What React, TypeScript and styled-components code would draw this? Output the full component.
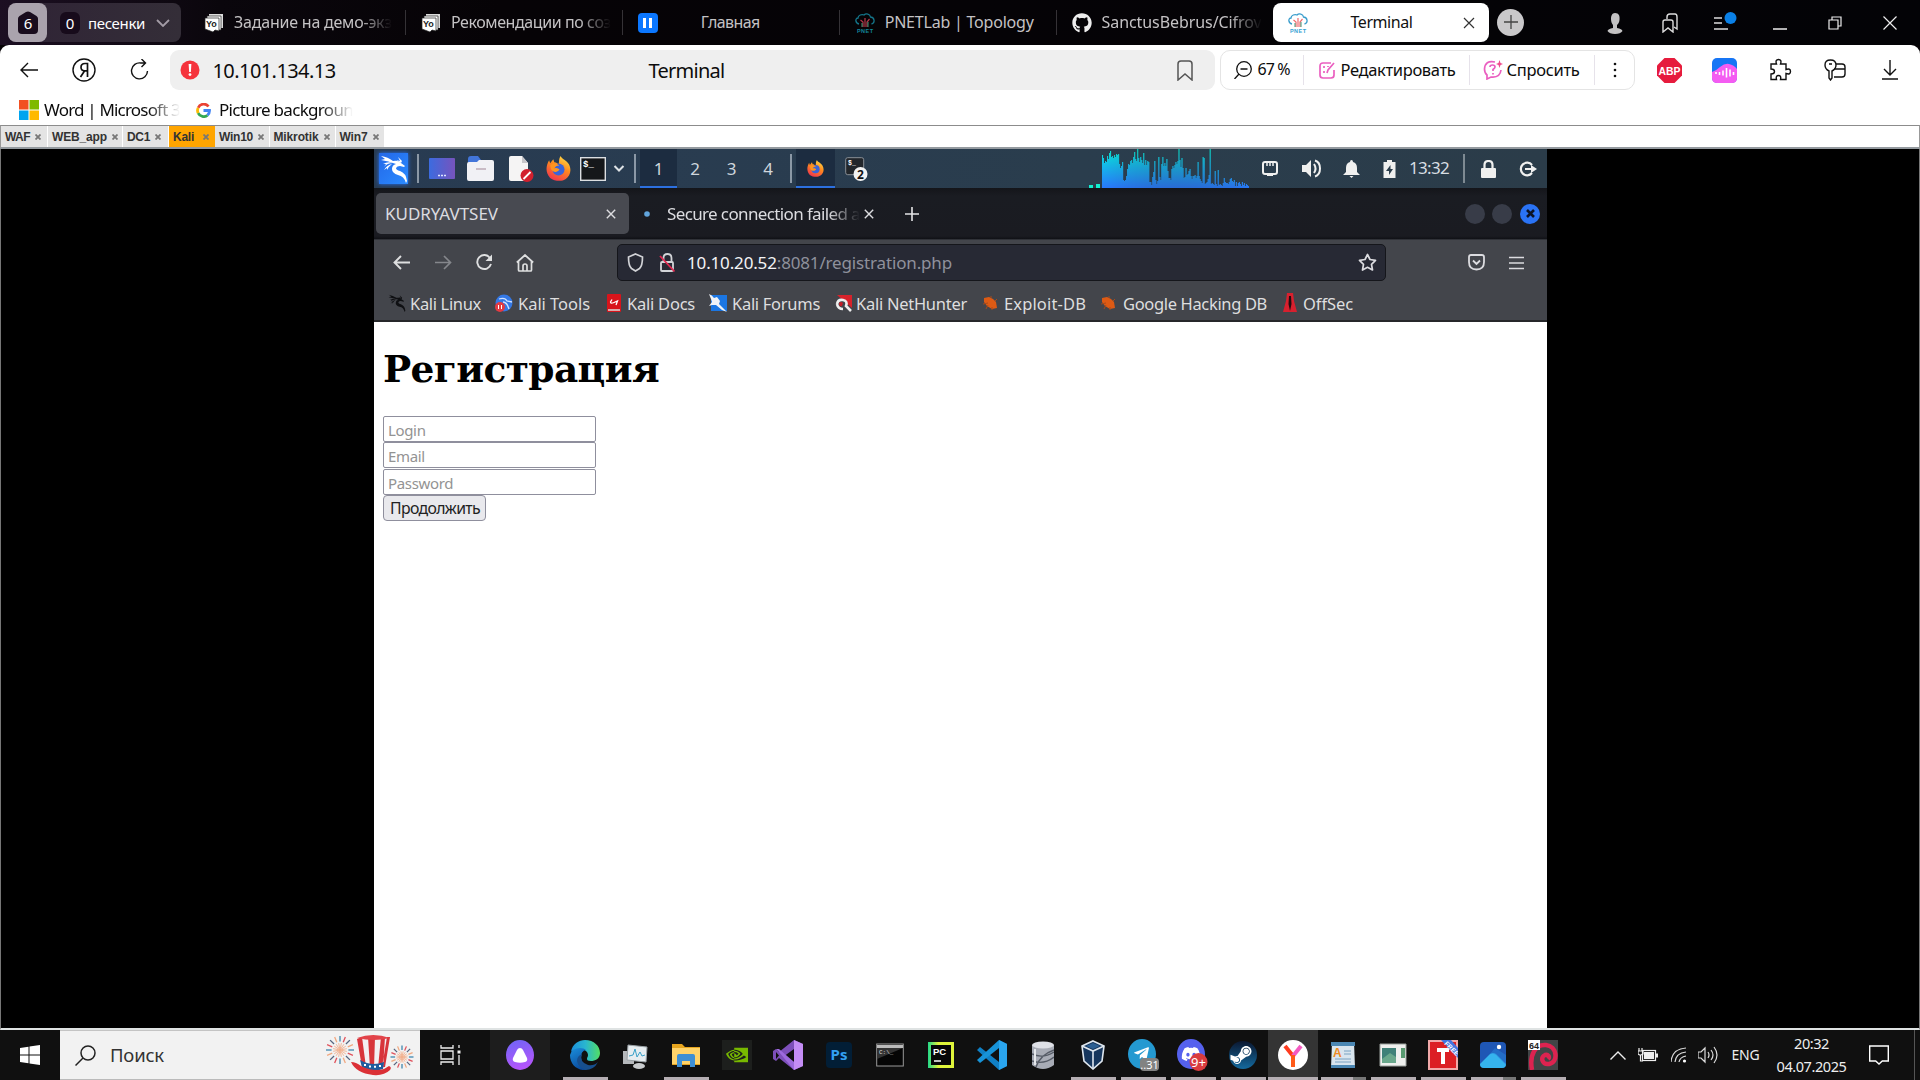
import React, { useLayoutEffect, useRef, useState } from 'react';
import styled, { createGlobalStyle } from 'styled-components';
import { FaGithub, FaSteamSymbol, FaTelegramPlane, FaDiscord } from 'react-icons/fa';
import { SiNvidia } from 'react-icons/si';

const ui = '"Noto Sans", "Open Sans", sans-serif';

const Global = createGlobalStyle`
  * { box-sizing: border-box; }
  html, body { margin: 0; padding: 0; overflow: hidden; background: #000; }
  body { font-family: ${ui}; }
  svg { display: block; flex: none; }
`;

const Screen = styled.div`
  width: 1920px;
  height: 1080px;
  display: flex;
  flex-direction: column;
  overflow: hidden;
  background: #060306;
`;

/* ---------- text that is spaced to fill a known width ---------- */
const Fixed = styled.span<{ $w: number; $l?: number; $s: number; $c?: string; $b?: number; $fade?: boolean; $f?: string; $t?: number }>`
  flex: none;
  width: ${p => p.$w}px;
  margin-left: ${p => p.$l ?? 0}px;
  padding-top: ${p => p.$t ?? 0}px;
  font-size: ${p => p.$s}px;
  font-weight: ${p => p.$b ?? 400};
  font-family: ${p => p.$f ?? 'inherit'};
  color: ${p => p.$c ?? 'inherit'};
  line-height: 1.2;
  white-space: pre;
  ${p => p.$fade && 'mask-image: linear-gradient(90deg, #000 calc(100% - 32px), transparent);'}
`;
const Inner = styled.span`display: inline-block;`;

type LabelProps = { w: number; l?: number; s: number; t?: number; c?: string; b?: number; fade?: boolean; f?: string; text: string; children?: React.ReactNode };
function Label({ w, l, s, t, c, b, fade, f, text, children }: LabelProps) {
  const ref = useRef<HTMLSpanElement>(null);
  const [gap, setGap] = useState(0);
  useLayoutEffect(() => {
    if (ref.current) setGap((w - ref.current.getBoundingClientRect().width) / text.length);
  }, []);
  return (
    <Fixed $w={w} $l={l} $s={s} $t={t} $c={c} $b={b} $fade={fade} $f={f}>
      <Inner ref={ref} style={{ letterSpacing: gap }}>{children ?? text}</Inner>
    </Fixed>
  );
}

const Row = styled.div<{ $h?: number }>`
  display: flex;
  align-items: center;
  flex: none;
  ${p => p.$h && `height: ${p.$h}px;`}
`;
const Cell = styled.div<{ $w: number; $l?: number }>`
  flex: 0 0 ${p => p.$w}px;
  margin-left: ${p => p.$l ?? 0}px;
  display: flex;
  align-items: center;
  justify-content: center;
`;
const Divider = styled.div<{ $l?: number; $h: number; $c: string; $w?: number }>`
  flex: 0 0 ${p => p.$w ?? 1}px;
  margin-left: ${p => p.$l ?? 0}px;
  height: ${p => p.$h}px;
  background: ${p => p.$c};
`;

type IconProps = { w: number; h: number; vb?: string; children: React.ReactNode; c?: string; sw?: number };
const Icon = ({ w, h, vb, children, c = '#111', sw = 1.4 }: IconProps) => (
  <svg width={w} height={h} viewBox={vb ?? `0 0 ${w} ${h}`} fill="none" stroke={c} strokeWidth={sw}>{children}</svg>
);

/* ---------- outer browser ---------- */
const TabStrip = styled(Row)`
  background: linear-gradient(90deg, #1c0f22 0, #0a060c 220px, #060306 500px, #030306 1920px);
  color: #c8c6c8;
`;
const Group = styled.div`
  display: flex;
  align-items: center;
  flex: 0 0 173px;
  height: 39px;
  margin-left: 8px;
  border-radius: 8px;
  background: linear-gradient(90deg, #2f2335, #342e38);
`;
const GroupHome = styled.div`
  display: flex;
  align-items: center;
  justify-content: center;
  width: 39px;
  height: 39px;
  border-radius: 8px;
  background: #aaa3ad;
`;
const Count = styled.div`
  display: flex;
  align-items: center;
  justify-content: center;
  width: 20px;
  height: 22px;
  margin-left: 13px;
  border-radius: 6px;
  background: #170b1b;
  color: #fff;
  font-size: 15px;
`;
const Tab = styled.div<{ $active?: boolean }>`
  display: flex;
  align-items: center;
  flex: 0 0 ${p => (p.$active ? 216 : 216.9)}px;
  height: ${p => (p.$active ? 39 : 25)}px;
  padding-left: 15px;
  border-radius: ${p => (p.$active ? 8 : 0)}px;
  background: ${p => (p.$active ? '#fff' : 'transparent')};
  color: ${p => (p.$active ? '#111' : '#c4c2c4')};
  border-right: ${p => (p.$active ? 0 : 1)}px solid #353236;
  &:nth-child(7) { border-right-color: transparent; }
`;
const Plus = styled(Cell)`
  height: 27px;
  margin-bottom: 1px;
  border-radius: 50%;
  background: #c9c8ca;
`;
const Chrome = styled.div`
  flex: none;
  height: 80px;
  background: #fff;
  border-radius: 9px 9px 0 0;
  color: #0c0c0c;
`;
const Address = styled.div`
  display: flex;
  align-items: center;
  flex: 0 0 1045px;
  height: 40px;
  margin-left: 3px;
  padding-left: 10px;
  border-radius: 9px;
  background: #efefef;
`;
const Tools = styled.div`
  display: flex;
  align-items: center;
  flex: 0 0 415px;
  height: 40px;
  margin-left: 5px;
  padding-left: 13px;
  border: 1px solid #e4e4e4;
  border-radius: 10px;
`;
const Push = styled.div`margin-left: auto; margin-right: 22px;`;

const YoIcon = () => (
  <Icon w={20} h={20} sw={0}>
    <path d="M5 1h14v14h-3V4H5z" fill="#ddd" /><path d="M3 3h14v14h-3V6H3z" fill="#fff" stroke="#222" strokeWidth=".7" />
    <path d="M1 5h14v13l-4-1-2 2-8-3z" fill="#fff" stroke="#222" strokeWidth=".7" />
    <text x="2" y="14" fontSize="9" fontWeight="700" fontFamily="Liberation Sans" fill="#222">Yo</text>
  </Icon>
);
const PnetIcon = ({ dim }: { dim?: boolean }) => (
  <Icon w={20} h={20} c={dim ? '#14758a' : '#3a9dcc'} sw={1.3}>
    <path d="M4 11C0 10 0 5 3 5c0-3 4-4 6-3 2-2 6-1 6.500 2 4 0 5 6 1 7" />
    <path d="M10 14V5M8 14V9L5.500 7M12 14V9l2.500-3" stroke={dim ? '#b5394a' : '#ef6a6f'} strokeWidth="1.200" />
    <path d="M7 10v4M13 9v5" stroke="#3e9a78" strokeWidth="1" />
    <text x="2" y="19.500" fontSize="5.500" fontWeight="700" fontFamily="Liberation Sans" textLength="16" fill={dim ? '#12869a' : '#38a3d4'} stroke="none">PNET</text>
  </Icon>
);

function BrowserTabs() {
  return (
    <TabStrip $h={45}>
      <Group>
        <GroupHome>
          <svg width="22" height="24" viewBox="0 0 22 24">
            <path d="M1 7.500Q1 6 2.500 5L9 1Q11 0 13 1l6.500 4Q21 6 21 7.500V19q0 4-4 4H5q-4 0-4-4z" fill="#190c1d" />
            <text x="11" y="17.500" fontSize="15" fill="#fff" textAnchor="middle" fontFamily="Noto Sans">6</text>
          </svg>
        </GroupHome>
        <Count>0</Count>
        <Label w={57} l={8} s={15} c="#fff" text="песенки" />
        <Cell $w={14} $l={11}><Icon w={14} h={8} c="#a39ca6" sw={1.800}><path d="M1 1l6 6 6-6" /></Icon></Cell>
      </Group>
      <Cell $w={8} />
      <Tab><YoIcon /><Label w={158} l={10} s={16} t={1} fade text="Задание на демо-экз" /></Tab>
      <Tab><YoIcon /><Label w={160} l={10} s={16} t={1} fade text="Рекомендации по соз" /></Tab>
      <Tab>
        <Icon w={20} h={20} sw={0}><rect width="20" height="20" rx="4" fill="#0b77ff" /><path d="M5 5h3v10H5zM11 5h3v10h-3z" fill="#fff" /></Icon>
        <Label w={59} l={43} s={16} t={1} text="Главная" />
      </Tab>
      <Tab><PnetIcon dim /><Label w={149} l={10} s={16} t={1} text="PNETLab | Topology" /></Tab>
      <Tab><FaGithub size={20} color="#eee" /><Label w={160} l={10} s={16} t={1} fade text="SanctusBebrus/Cifrov" /></Tab>
      <Tab $active>
        <PnetIcon /><Label w={62} l={42} s={16} t={1} text="Terminal" />
        <Cell $w={12} $l={51}><Icon w={12} h={12} c="#333" sw={1.200}><path d="M1 1l10 10M11 1L1 11" /></Icon></Cell>
      </Tab>
      <Plus $w={27} $l={8}><Icon w={14} h={14} c="#444" sw={1.300}><path d="M7 0v14M0 7h14" /></Icon></Plus>
      <Cell $w={55} $l={63}><Icon w={16} h={22} sw={0}><path d="M8 1c4 0 5 3 4.500 7-.4 3-1.500 4-2.500 5v3q5 1 5.500 3-2 3-7.500 3t-7.500-3q.5-2 5.500-3v-3C5 12 4 10 4 7c0-3 1-6 4-6z" fill="#c3c2c3" /></Icon></Cell>
      <Cell $w={55}><Icon w={16} h={20} c="#ddd"><path d="M1 19V9q0-2 2-2h6q2 0 2 2v10l-5-4z" /><path d="M5 6V4q0-3 3-3h5q2 0 2 3v12l-3-2" /></Icon></Cell>
      <Cell $w={55}><Icon w={24} h={22} c="#ddd"><path d="M1 6h8M1 11h8M1 17h14" /><circle cx="17.500" cy="6" r="6" fill="#0a80e6" stroke="none" /></Icon></Cell>
      <Cell $w={55}><Icon w={14} h={14} c="#fff"><path d="M0 13h14" /></Icon></Cell>
      <Cell $w={55}><Icon w={14} h={14} c="#eee" sw={1.200}><path d="M1 4h9v9H1zM4 4V1h9v9h-3" /></Icon></Cell>
      <Cell $w={55}><Icon w={14} h={14} c="#eee" sw={1.200}><path d="M.5.5l13 13M13.500.5l-13 13" /></Icon></Cell>
    </TabStrip>
  );
}

function BrowserBars() {
  return (
    <Chrome>
      <Row $h={50}>
        <Cell $w={55} $l={1.500}><Icon w={18} h={16}><path d="M18 8H1M8 1L1 8l7 7" /></Icon></Cell>
        <Cell $w={55}><Icon w={24} h={24}><circle cx="12" cy="12" r="11" /><path d="M15.500 19V5.500h-2.500q-4 0-4 3.800 0 3.500 3.500 3.500h3M12.500 13L8.500 19" strokeWidth="1.700" /></Icon></Cell>
        <Cell $w={55}><Icon w={19} h={22}><path d="M17.500 12A8 8 0 1 1 11 4h4M11.500 0l4 4-4 4" /></Icon></Cell>
        <Address>
          <Icon w={20} h={20} sw={0}><circle cx="10" cy="10" r="9.500" fill="#f5333c" /><path d="M8.600 4h2.800l-.5 8H9.100z" fill="#fff" /><circle cx="10" cy="14.600" r="1.400" fill="#fff" /></Icon>
          <Label w={123} l={13} s={20} t={1} text="10.101.134.13" />
          <Label w={76} l={313} s={20} t={1} text="Terminal" />
          <Push><Icon w={16} h={21} c="#555" sw={1.500}><path d="M1 20V4q0-3 3-3h8q3 0 3 3v16l-7-6z" /></Icon></Push>
        </Address>
        <Tools>
          <Icon w={18} h={18} sw={1.300}><circle cx="10" cy="8" r="7.300" /><path d="M6.500 8h7M5 13l-4.500 5" /></Icon>
          <Label w={32} l={6} s={16} text="67 %" />
          <Divider $l={13} $h={30} $c="#e6e2ea" />
          <Cell $w={17} $l={15}><Icon w={17} h={19} c="#ea5fc0" sw={1.700}><path d="M12 2H4Q1 2 1 5v9q0 3 3 3h8q3 0 3-3V9M8 12l1-3 6-7M5 5v2M5 10v2M9 5v1" /></Icon></Cell>
          <Label w={115} l={5} s={16.500} text="Редактировать" />
          <Divider $l={13} $h={30} $c="#e6e2ea" />
          <Cell $w={20} $l={13}><Icon w={20} h={20} c="#ea5fc0" sw={1.700}><path d="M12 2Q2 0 1.500 9q0 4 2.500 6v4l4-2q9 1 10-7" /><path d="M7 7q0-2 2.500-2T12 7q0 1-2 2.500V11M10 13v1.500" /><path d="M16.500 0l1 3 2.500 1-2.500 1-1 3-1-3L13 4l2.500-1z" fill="#ef4b8c" stroke="none" /></Icon></Cell>
          <Label w={73} l={4} s={16.500} text="Спросить" />
          <Divider $l={14} $h={30} $c="#e6e2ea" />
          <Cell $w={4} $l={18}><Icon w={4} h={16} sw={0}><circle cx="2" cy="2" r="1.300" fill="#111" /><circle cx="2" cy="8" r="1.300" fill="#111" /><circle cx="2" cy="14" r="1.300" fill="#111" /></Icon></Cell>
        </Tools>
        <Cell $w={55} $l={7.500}><Icon w={25} h={25} sw={0}><path d="M7.500 0h10L25 7.500v10L17.500 25h-10L0 17.500v-10z" fill="#e61b3d" /><text x="12.500" y="16.500" fontSize="11" fontWeight="700" fontFamily="Liberation Sans" fill="#fff" textAnchor="middle" textLength="22" lengthAdjust="spacingAndGlyphs">ABP</text></Icon></Cell>
        <Cell $w={55}><Icon w={25} h={25} sw={0}><rect width="25" height="25" rx="5" fill="#1675f5" /><path d="M0 14q5-2 8-5 5-4 9-3 5 1 8 5v9q0 5-5 5H5q-5 0-5-5z" fill="#f45cf2" /><path d="M4 14v2M7.500 14v3M11 12.500v5M14.500 10v9.500M18 11.500v7M21.500 14v3" stroke="#fff" strokeWidth="1.600" /></Icon></Cell>
        <Cell $w={55}><Icon w={24} h={24}><path d="M3 6h5.500Q7 1.500 10.500 1.500T12.500 6H18v5.500q4.500-1.500 4.500 2T18 15.500V21.500H12.500q1-4-2-4t-2 4H3v-5.500q3.500 0 3.500-2.500T3 11z" /></Icon></Cell>
        <Cell $w={55}><Icon w={22} h={22}><path d="M5 12Q1 10 1 6q0-5 5.500-5T12 6q0 4-4 6v7l-1.500 2L5 19zM5 5h3" /><path d="M12 5h6q3 0 3 3v7q0 3-3 3h-8M10 10h11" /></Icon></Cell>
        <Cell $w={55}><Icon w={16} h={20}><path d="M8 0v14M2 9l6 6 6-6M0 19h16" /></Icon></Cell>
      </Row>
      <Row $h={30}>
        <Cell $w={20} $l={19}><Icon w={20} h={20} sw={0}><path d="M0 0h9.500v9.500H0z" fill="#f25022" /><path d="M10.500 0H20v9.500h-9.500z" fill="#7fba00" /><path d="M0 10.500h9.500V20H0z" fill="#00a4ef" /><path d="M10.500 10.500H20V20h-9.500z" fill="#ffb900" /></Icon></Cell>
        <Label w={136} l={5} s={17} fade text="Word | Microsoft 3" />
        <Cell $w={14} $l={16}><Icon w={15} h={15} sw={2.800}><path d="M12.500 3.500A6 6 0 0 0 2.200 4.800" stroke="#ea4335" /><path d="M2.200 4.800a6 6 0 0 0 0 5.400" stroke="#fbbc05" /><path d="M2.200 10.200a6 6 0 0 0 9.300 2" stroke="#34a853" /><path d="M11.500 12.200a6 6 0 0 0 2-4.700H7.500" stroke="#4285f4" /></Icon></Cell>
        <Label w={134} l={8} s={17} fade text="Picture backgroun" />
      </Row>
    </Chrome>
  );
}

/* ---------- lab session tabs ---------- */
const Sessions = styled(Row)`
  background: #fff;
  border-top: 1px solid #8c8c8c;
  border-bottom: 2px solid #949a9f;
  border-left: 1px solid #999;
  border-right: 1px solid #999;
`;
const Session = styled.div<{ $w: number; $on?: boolean }>`
  display: flex;
  align-items: center;
  flex: 0 0 ${p => p.$w}px;
  height: 21px;
  padding-left: 4px;
  border-right: ${p => (p.$on ? 0 : 1)}px solid #fff;
  background: ${p => (p.$on ? '#ffa500' : '#e4e4e4')};
  color: #333;
`;
const sessions: [string, number, number][] = [['WAF', 47, 25], ['WEB_app', 75, 55], ['DC1', 46, 23], ['Kali', 46, 21], ['Win10', 54.5, 34], ['Mikrotik', 66, 45], ['Win7', 49, 28]];

/* ---------- remote desktop ---------- */
const Stage = styled.div`
  flex: none;
  display: flex;
  justify-content: center;
  height: 881px;
  padding: 0 0 0 1px;
  background: #000;
  border-left: 1px solid #777;
  border-right: 1px solid #777;
  border-bottom: 2px solid #dfe3e3;
`;
const Desktop = styled.div`
  width: 1173px;
  height: 879px;
  display: flex;
  flex-direction: column;
  background: #fff;
`;
const Panel = styled(Row)`
  background: linear-gradient(90deg, #283b52, #2a3d4d 60%, #2b3c49);
  color: #d8dde2;
`;
const Work = styled(Cell)<{ $on?: boolean }>`
  height: 39px;
  font-size: 17px;
  padding-top: 1px;
  color: #cfd6dd;
  background: ${p => (p.$on ? '#1c2c40' : 'transparent')};
  border-bottom: 2px solid ${p => (p.$on ? '#2c70e0' : 'transparent')};
`;
const KaliBox = styled(Cell)`
  height: 31px;
  background: linear-gradient(135deg, #2468e8, #2a8aff);
  box-shadow: 0 0 4px #2775ff;
`;
const TitleBar = styled(Row)`
  background: linear-gradient(#14151a, #1a1c22 8px, #1a1b21 48px, #101116);
  color: #dcdce0;
`;
const FoxTab = styled.div`
  display: flex;
  align-items: center;
  flex: 0 0 253px;
  height: 41px;
  margin-left: 2px;
  border-radius: 5px;
  background: #484a51;
`;
const WinDot = styled.div<{ $l: number; $on?: boolean }>`
  display: flex;
  align-items: center;
  justify-content: center;
  flex: 0 0 20px;
  height: 20px;
  margin-left: ${p => p.$l}px;
  border-radius: 50%;
  background: ${p => (p.$on ? '#2a73f5' : '#383c48')};
`;
const FoxBars = styled.div`
  flex: none;
  height: 83px;
  background: #43454b;
  border-top: 1px solid #303238;
  border-bottom: 2px solid #26272a;
  color: #dededf;
`;
const UrlField = styled.div`
  display: flex;
  align-items: center;
  flex: 0 0 769px;
  height: 37px;
  margin-left: 83px;
  border: 1px solid #15161b;
  border-radius: 5px;
  background: #272934;
`;
const Host = styled.span`color: #f4f4f6;`;

const Dragon = ({ s, c }: { s: number; c: string }) => (
  <svg width={s} height={s} viewBox="0 0 28 28" fill={c}>
    <path d="M1 1q7 1 12 5 5-1 8 2l4 3-1 1-4-1q-3 0-4 2 0 2 4 3 6 2 7 10l-1 2q-2-7-8-8-6-2-6-6 0-4 4-5Q8 6 1 5l4-1z" />
    <path d="M3 9q5-3 10-1-6 0-9 4l2-3zM4 15q3-5 8-6-4 3-5 6l0-2zM18 2l4 4-1 2-5-3 4 1z" />
  </svg>
);

const Fox = ({ s }: { s: number }) => (
  <svg width={s} height={s} viewBox="0 0 24 24">
    <defs><linearGradient id="fx" x1=".8" y1="0" x2=".3" y2="1"><stop offset="0" stopColor="#ffe14a" /><stop offset=".45" stopColor="#ff8a1e" /><stop offset="1" stopColor="#f0344e" /></linearGradient></defs>
    <path d="M14 0c1 3 6 4 8 8 3 6 1 11-3 14-4 3-11 2-15-1C-1 16 0 9 3 4l1 3 3-4 1 3c2 0 3 1 4 2 1-3 0-5 2-8z" fill="url(#fx)" />
    <circle cx="12" cy="13" r="5.800" fill="#3a64d8" /><path d="M4 9c3-3 6-2 9 0-3 0-4 1-5 3 2-1 4 0 5 1-2 3-6 3-8 0z" fill="#ff951f" />
  </svg>
);
const Shell = ({ w, h, fs }: { w: number; h: number; fs: number }) => (
  <svg width={w} height={h} viewBox={`0 0 ${w} ${h}`}><rect x=".7" y=".7" width={w - 1.4} height={h - 1.4} fill="#15171a" stroke="#dcdfe2" strokeWidth="1.400" /><text x={w * .12} y={h * .42} fontSize={fs} fontWeight="700" fontFamily="Liberation Mono" fill="#fff">$_</text></svg>
);
const Bug = () => <svg width="15" height="15"><path d="M1 2l5-1 4 2 3 3 1 6-5 1-5-3-3-4z" fill="#dd5a14" /><path d="M3 13l2-4M8 2V0M0 8l5-1M12 5l2-2M9 14v-3" stroke="#a94a1a" /></svg>;

const bars = [33, 30, 25, 27, 26, 32, 29, 35, 37, 31, 32, 30, 33, 31, 34, 33, 34, 24, 20, 22, 26, 8, 7, 8, 12, 19, 24, 23, 27, 28, 25, 31, 36, 29, 27, 39, 30, 26, 31, 28, 25, 35, 23, 28, 23, 27, 26, 6, 6, 3, 11, 16, 27, 8, 4, 7, 31, 11, 8, 24, 31, 22, 25, 22, 29, 17, 10, 10, 8, 19, 22, 20, 23, 26, 24, 27, 39, 28, 21, 30, 20, 10, 11, 20, 13, 14, 17, 19, 12, 9, 12, 12, 13, 10, 12, 26, 12, 9, 7, 5, 31, 30, 4, 5, 6, 9, 13, 39, 4, 5, 4, 3, 17, 4, 2, 18, 3, 4, 3, 2, 5, 10, 6, 5, 5, 4, 6, 9, 10, 7, 6, 8, 2, 6, 2, 5, 6, 4, 2, 6, 3, 5, 2, 4, 3, 2];
const Spectrum = () => (
  <svg width="160" height="39" viewBox="0 0 160 39">
    <defs><linearGradient id="gr" gradientUnits="userSpaceOnUse" x1="0" y1="0" x2="0" y2="39"><stop offset="0" stopColor="#08e6c8" /><stop offset=".3" stopColor="#10c8e6" /><stop offset="1" stopColor="#2878ff" /></linearGradient></defs>
    <path d="M0 36h4v3H0zM7 35h4v4H7z" fill="#12efd0" />
    {bars.map((b, i) => <rect key={i} x={13 + i * 1.006} y={39 - b} width="1.050" height={b} fill="url(#gr)" />)}
  </svg>
);

function KaliPanel() {
  return (
    <Panel $h={39}>
      <KaliBox $w={29} $l={5}><Dragon s={28} c="#fff" /></KaliBox>
      <Divider $l={9} $w={2} $h={29} $c="#8b98a6" />
      <Cell $w={26} $l={10}><svg width="26" height="21"><defs><linearGradient id="dk"><stop stopColor="#3c6bdf" /><stop offset="1" stopColor="#7654bd" /></linearGradient></defs><rect width="26" height="21" rx="1" fill="url(#dk)" /><path d="M9 17.500h8" stroke="#dfe6ff" strokeWidth="1.500" strokeDasharray="2 1" /></svg></Cell>
      <Cell $w={27} $l={12}><svg width="27" height="25"><path d="M1 3q0-3 3-3h7l3 4h10v9H1z" fill="#4275d9" /><path d="M0 8q0-2 2-2h8l2-2h13q2 0 2 2v17q0 2-2 2H2q-2 0-2-2z" fill="#f1f1f5" /><path d="M9 13h10" stroke="#c9bcc6" strokeWidth="2" /></svg></Cell>
      <Cell $w={25} $l={15}><svg width="25" height="26"><path d="M0 2q0-2 2-2h11l6 7v18H2q-2 0-2-2z" fill="#f5f4f4" /><path d="M13 0v7h6z" fill="#c7c6ca" /><circle cx="18" cy="19.500" r="6.500" fill="#d2202e" /><path d="M14.500 23l7-7" stroke="#fff" strokeWidth="1.800" /></svg></Cell>
      <Cell $w={25} $l={12}><Fox s={25} /></Cell>
      <Cell $w={26} $l={9}><Shell w={26} h={24} fs={9} /></Cell>
      <Cell $w={12} $l={7}><Icon w={12} h={7} c="#dfe3e7" sw={2}><path d="M1.500 1L6 5.500 10.500 1" /></Icon></Cell>
      <Divider $l={9} $w={2} $h={29} $c="#8b98a6" />
      <Work $w={37} $l={4} $on>1</Work>
      <Work $w={36}>2</Work>
      <Work $w={37}>3</Work>
      <Work $w={36}>4</Work>
      <Divider $l={4} $w={2} $h={29} $c="#8b98a6" />
      <Work $w={39} $l={4} $on><Fox s={17} /></Work>
      <Cell $w={24} $l={10}>
        <svg width="24" height="26"><rect x=".7" y="1.700" width="18" height="17" rx="2" fill="#22262b" stroke="#8a9097" /><text x="3" y="9" fontSize="6.500" fontWeight="700" fill="#fff" fontFamily="Liberation Mono">$_</text><circle cx="15.500" cy="18" r="7" fill="#f2f2f2" /><text x="15.500" y="22.500" fontSize="12" fontWeight="700" fill="#111" textAnchor="middle" fontFamily="Noto Sans">2</text></svg>
      </Cell>
      <Cell $w={160} $l={220}><Spectrum /></Cell>
      <Cell $w={18} $l={12}><Icon w={16} h={15} c="#f0f0ef" sw={2}><rect x="1" y="1" width="14" height="12" rx="2" /><path d="M5 1v4M8 1v4M11 1v4" strokeWidth="1.500" /><path d="M5 14h6" /></Icon></Cell>
      <Cell $w={21} $l={23}><Icon w={21} h={19} c="#f0f0ef" sw={2}><path d="M0 6h4l5-5v17l-5-5H0z" fill="#f0f0ef" stroke="none" /><path d="M12 5q3 4.500 0 9M13 1.500q5 1.500 5 8t-5 8" /></Icon></Cell>
      <Cell $w={17} $l={20}><Icon w={17} h={18} sw={0}><path d="M8.500 0q1.500 0 1.500 2 4 1 4 6v4l3 3H0l3-3V8q0-5 4-6 0-2 1.500-2zM6.500 16h4l-2 2z" fill="#f0f0ef" /></Icon></Cell>
      <Cell $w={14} $l={22}><Icon w={13} h={18} sw={0}><path d="M.5 2H4V0h5v2h3.500v16H.5z" fill="#f0f0ef" /><path d="M7.500 5L3 11h3v4l4-6H7.500z" fill="#2b3d4b" /></Icon></Cell>
      <Label w={40} l={13} s={17} text="13:32" />
      <Divider $l={14} $w={2} $h={29} $c="#7e8a92" />
      <Cell $w={16} $l={15}><Icon w={15} h={18} c="#f0f0ef" sw={2.200}><rect y="8" width="15" height="10" rx="1" fill="#f0f0ef" stroke="none" /><path d="M3.500 9V5q0-4 4-4t4 4v4" /></Icon></Cell>
      <Cell $w={18} $l={23}><Icon w={18} h={16} c="#f0f0ef" sw={2.200}><path d="M13 4A6.300 6.300 0 1 0 13 12M6 8h9" /><path d="M12 4l6 4-6 4z" fill="#f0f0ef" stroke="none" /></Icon></Cell>
    </Panel>
  );
}

const X = () => <Icon w={10} h={10} c="#dddde0" sw={1.400}><path d="M.8.8l8.400 8.400M9.200.8L.8 9.200" /></Icon>;

function Firefox() {
  return (
    <>
      <TitleBar $h={51}>
        <FoxTab>
          <Label w={113} l={9} s={17} t={2} text="KUDRYAVTSEV" />
          <Cell $w={10} $l={108}><X /></Cell>
        </FoxTab>
        <Cell $w={6} $l={15}><Icon w={6} h={6} sw={0}><circle cx="3" cy="3" r="2.800" fill="#61a5dc" /></Icon></Cell>
        <Label w={193} l={17} s={17} t={2} fade text="Secure connection failed a" />
        <Cell $w={10} $l={4}><X /></Cell>
        <Cell $w={15} $l={30}><Icon w={14} h={14} c="#e4e4e6" sw={1.600}><path d="M7 0v14M0 7h14" /></Icon></Cell>
        <WinDot $l={546} /><WinDot $l={7} />
        <WinDot $l={8} $on><Icon w={9} h={9} c="#0c1426" sw={2.600}><path d="M1 1l7 7M8 1L1 8" /></Icon></WinDot>
      </TitleBar>
      <FoxBars>
        <Row $h={45}>
          <Cell $w={17} $l={19}><Icon w={17} h={15} c="#dedfe0" sw={1.900}><path d="M17 7.500H1.500M8 1L1.500 7.500 8 14" /></Icon></Cell>
          <Cell $w={17} $l={25}><Icon w={17} h={15} c="#85878c" sw={1.700}><path d="M0 7.500h15.500M9 1l6.500 6.500L9 14" /></Icon></Cell>
          <Cell $w={18} $l={23}><Icon w={18} h={17} c="#dedfe0" sw={1.900}><path d="M15 4A7 7 0 1 0 16 10" /><path d="M17 .5V7h-6.500z" fill="#dedfe0" stroke="none" /></Icon></Cell>
          <Cell $w={18} $l={23}><Icon w={18} h={18} c="#dedfe0" sw={1.700}><path d="M.8 8.500L9 1l8.200 7.500M2.500 7.500V16q0 1 1 1h11q1 0 1-1V7.500M7 17v-5q0-2 2-2t2 2v5" /></Icon></Cell>
          <UrlField>
            <Cell $w={18} $l={8}><Icon w={17} h={19} c="#d2d3d7" sw={1.700}><path d="M8.500 1l7 3q0 9-3 11.500l-4 2.500-4-2.500Q1.500 13 1.500 4z" /></Icon></Cell>
            <Cell $w={17} $l={15}><Icon w={17} h={20} c="#d2d3d7" sw={1.800}><rect x="2" y="9" width="12" height="9" rx="1" /><path d="M4.500 9V5q0-4 4-4t4 4v4" /><path d="M1 3l14.500 15.500" stroke="#e22850" /></Icon></Cell>
            <Label w={265} l={11} s={17} t={1} c="#8f919c" text="10.10.20.52:8081/registration.php"><Host>10.10.20.52</Host>:8081/registration.php</Label>
            <Cell $w={18} $l={406}><Icon w={19} h={19} c="#dcdce0" sw={1.700}><path d="M9.500 1.500l2.500 5 5.500.8-4 4 1 5.700-5-2.700-5 2.700 1-5.700-4-4L7 6.500z" strokeLinejoin="round" /></Icon></Cell>
          </UrlField>
          <Cell $w={18} $l={81}><Icon w={17} h={17} c="#dcdce0" sw={1.800}><path d="M3 1h11q2 0 2 2v5q0 7.500-7.500 7.500T1 8V3q0-2 2-2zM5 6.500l3.500 3.500L12 6.500" /></Icon></Cell>
          <Cell $w={15} $l={24}><Icon w={15} h={14} c="#dcdce0" sw={1.600}><path d="M0 1.500h15M0 7h15M0 12.500h15" /></Icon></Cell>
        </Row>
        <Row $h={36}>
          <Cell $w={19} $l={13}><Dragon s={18} c="#0f1013" /></Cell>
          <Label w={71} l={4} s={16.500} t={1} text="Kali Linux" />
          <Cell $w={18} $l={14}><svg width="18" height="18"><circle cx="9" cy="9" r="8.500" fill="#3478e5" /><path d="M4 5q6-2 8 2l5 1M8 8q4 0 6 7" stroke="#cfe0ff" strokeWidth="1.300" fill="none" /><circle cx="5" cy="13" r="5" fill="#e33b42" /><path d="M3.500 11v4M6.500 11v4" stroke="#fff" /></svg></Cell>
          <Label w={72} l={5} s={16.500} t={1} text="Kali Tools" />
          <Cell $w={14} $l={17}><svg width="14" height="18"><rect width="14" height="18" rx="1" fill="#d8141b" /><path d="M1 16h12" stroke="#ddd" strokeWidth="1.500" /><path d="M5 5.500L3.500 8q0 2 3.500.5T10.500 7L9 11" stroke="#fff" fill="none" strokeWidth="1.300" /></svg></Cell>
          <Label w={68} l={6} s={16.500} t={1} text="Kali Docs" />
          <Cell $w={18} $l={14}><svg width="18" height="18"><rect x="2" y="1" width="16" height="16" fill="#1b76e3" /><path d="M0 0q3 1 5 4l3-1 3 4-1 3 8 8-5-2-6-5-4 0-3 1 3-4-1-3z" fill="#f0f3f8" /></svg></Cell>
          <Label w={88} l={5} s={16.500} t={1} text="Kali Forums" />
          <Cell $w={18} $l={14}><svg width="18" height="18"><path d="M3 1h15v13z" fill="#d7222b" /><path d="M3 10q1-5 6-4t3 6l5 5M9 15q-5 0-6-5" fill="none" stroke="#eee" strokeWidth="2.600" /><path d="M5 9q2-2 4 0l-1 3q-3 1-3-3z" fill="#c41d28" /></svg></Cell>
          <Label w={111} l={4} s={16.500} t={1} text="Kali NetHunter" />
          <Cell $w={15} $l={16}><Bug /></Cell>
          <Label w={82} l={6} s={16.500} t={1} text="Exploit-DB" />
          <Cell $w={15} $l={15}><Bug /></Cell>
          <Label w={144} l={7} s={16.500} t={1} text="Google Hacking DB" />
          <Cell $w={14} $l={16}><svg width="14" height="20"><path d="M4 0h6l1 8 3 11H0L3 8z" fill="#d8202e" /><path d="M6 3h2l.5 8L7 18l-1.500-7z" fill="#220d10" /></svg></Cell>
          <Label w={50} l={6} s={16.500} t={1} text="OffSec" />
        </Row>
      </FoxBars>
    </>
  );
}

const Page = styled.main`
  flex: 1;
  padding: 24px 9px;
  display: flex;
  flex-direction: column;
  align-items: flex-start;
`;
const Title = styled.h1`
  margin: 0 0 23px;
  height: 47px;
  display: flex;
  align-items: center;
  color: #000;
`;
const Field = styled.input`
  width: 213px;
  height: 26px;
  margin-bottom: .4px;
  padding: 3px 4px 1px;
  border: 1px solid #8f8f9d;
  border-radius: 2px;
  font: 15px ${ui};
  letter-spacing: -.35px;
  background: #fff;
  outline: none;
  &::placeholder { color: #939393; opacity: 1; }
`;
const Submit = styled.button`
  display: flex;
  align-items: center;
  width: 103px;
  height: 26px;
  padding: 1px 0 0 6px;
  border: 1px solid #8f8f9d;
  border-radius: 4px;
  background: #e9e9ed;
  color: #222;
  font-family: ${ui};
`;

/* ---------- Windows taskbar ---------- */
const Taskbar = styled(Row)`
  background: #101010;
  color: #eee;
`;
const Search = styled.div`
  display: flex;
  align-items: center;
  flex: 0 0 360px;
  height: 50px;
  padding-left: 15px;
  background: #f2f2f2;
  border-top: 1px solid #c4c4c4;
  border-bottom: 1px solid #bbb;
  color: #333;
`;
const Assistant = styled.div`
  display: flex;
  align-items: center;
  justify-content: center;
  flex: 0 0 60px;
  height: 50px;
  background: #1d1d1d;
`;
const Task = styled.div<{ $run?: boolean; $on?: boolean; $more?: boolean }>`
  display: flex;
  align-items: center;
  justify-content: center;
  flex: 0 0 ${p => (p.$run ? 50 : 51)}px;
  height: 50px;
  padding-top: 3px;
  border-bottom: 3px solid transparent;
  background: ${p => (p.$on ? '#343434' : 'transparent')};
  ${p => p.$run && `border-image: linear-gradient(90deg, transparent ${p.$on ? 0 : 5.5}px, #b5aeb3 ${p.$on ? 0 : 5.5}px, #b5aeb3 ${p.$more ? 34 : p.$on ? 51 : 45}px, ${p.$more ? '#777 34px, #777 45px,' : ''} transparent ${p.$on ? 51 : 45}px) 3;
  border-style: solid; border-width: 0 0 3px;`}
`;
const Clock = styled.div`
  display: flex;
  flex-direction: column;
  align-items: center;
  justify-content: center;
  flex: 0 0 70px;
  margin-left: 17px;
  gap: 5px;
`;

const burst = (cx: number, cy: number, r: number) => Array.from({ length: 16 }, (_, i) => {
  const a = (i * Math.PI) / 8;
  const c = ['#3f86ad', '#e0525c', '#56657f', '#f0a880'][i % 4];
  return <g key={i}><path d={`M${cx + Math.cos(a) * r * .6} ${cy + Math.sin(a) * r * .6}L${cx + Math.cos(a) * r} ${cy + Math.sin(a) * r}`} stroke={c} strokeWidth="1.300" /><path d={`M${cx} ${cy}L${cx + Math.cos(a + .2) * r * .5} ${cy + Math.sin(a + .2) * r * .5}`} stroke="#f3b08d" strokeWidth=".9" /></g>;
});
const Hat = () => (
  <svg width="90" height="44" viewBox="0 0 90 44">
    {burst(15, 17, 14)}{burst(77, 24, 11.500)}
    <path d="M32 6q16-5 33-1l-6 30H38z" fill="#f3eff2" />
    <path d="M32 6l5 28h4L37 4zM43 4l2 31h4l1-31zM56 4l-3 31h5l2-31zM62 4h3l-5 30h-3z" fill="#d8343b" />
    <path d="M32 5q16-6 33 0-16 4-33 0z" fill="#e2444a" />
    <path d="M35 27q12 7 24 2l-1 7q-12 4-21-2z" fill="#1f5c9e" />
    <path d="M39 32h2M44 33.500h2M49 33.800h2M54 33h2" stroke="#fff" strokeWidth="2" />
    <path d="M26 29q5 0 10 4 12 6 23 3l5-3q3 1 1 4-6 6-17 5-17-2-22-13z" fill="#db3036" />
  </svg>
);

const icon = {
  alice: <svg width="28" height="30"><defs><linearGradient id="al" x2=".3" y2="1"><stop stopColor="#6d65f7" /><stop offset="1" stopColor="#b356fa" /></linearGradient></defs><ellipse cx="14" cy="15" rx="14" ry="15" fill="url(#al)" /><path d="M14 8q2 0 3 2l4 8q1 3-2 4-5 1.500-10 0-3-1-2-4l4-8q1-2 3-2z" fill="#fff" /></svg>,
  edge: <svg width="30" height="30"><defs><linearGradient id="e1"><stop stopColor="#1b8fdc" /><stop offset=".5" stopColor="#29b6cf" /><stop offset="1" stopColor="#52df64" /></linearGradient><linearGradient id="e2" y2="1" x2=".5"><stop stopColor="#1b8fdc" /><stop offset="1" stopColor="#0a4a9c" /></linearGradient></defs><path d="M1 12C2 4 9 0 15 0c9 0 15 6 15 13 0 6-5 8-9 8-3 0-4-1-4-2 0-2 1-2 1-4 0-3-3-6-8-6-5 0-9 3-9 3z" fill="url(#e1)" /><path d="M0 15q2-7 10-7 4 0 6 2-5 1-5 7 0 9 9 11-3 2-7 2C5 29 0 23 0 15z" fill="url(#e2)" /><path d="M12 14q-3 8 6 11 6 1 10-3-4 8-13 8-7-3-8-9 0-5 5-7z" fill="#174f8e" /></svg>,
  perf: <svg width="28" height="28"><path d="M1 10h11v13H1z" fill="#b5b8bb" /><path d="M6 4l19 2-1 15-19-2z" fill="#e7edf0" stroke="#9aa1a5" /><path d="M7 15l4-1 2-6 2 8 3-5 2 4 3-1" stroke="#3aa1c9" fill="none" /><ellipse cx="17" cy="25" rx="6" ry="3" fill="#c9ccce" /></svg>,
  files: <svg width="28" height="26"><path d="M0 2h10l3 3h15v18H0z" fill="#e7a51e" /><path d="M0 6h28v16H0z" fill="#ffd36a" /><path d="M5 14q0-2 2-2h14q2 0 2 2v11h-5v-6h-8v6H5z" fill="#3e8fd4" /></svg>,
  nvidia: <svg width="30" height="30"><rect width="30" height="30" fill="#1d1f1d" /><foreignObject x="4" y="4" width="22" height="22"><SiNvidia size={22} color="#78b900" /></foreignObject></svg>,
  vs: <svg width="30" height="30"><path d="M21 0l9 4v22l-9 4L6 18l-3 3-3-2V11l3-2 3 3z" fill="#7d4fba" /><path d="M21 0l9 4v22l-9 4z" fill="#c48df5" /><path d="M21 9l-9 6.500L21 22zM3 12v7l3-3.500z" fill="#101010" /><path d="M3 9l3 3 15 18V22L6 9z" fill="#9d6add" /></svg>,
  ps: <svg width="26" height="26"><rect width="26" height="26" rx="4" fill="#021e36" /><text x="13" y="18" fontSize="15" fontWeight="700" fontFamily="Noto Sans" fill="#33a1f2" textAnchor="middle">Ps</text></svg>,
  cmd: <svg width="28" height="24"><rect x=".7" y="1" width="26.600" height="22" fill="#050505" stroke="#999" /><path d="M1 2h26v3H1z" fill="#bbb" /><path d="M1 5h26L1 16z" fill="#333" /><text x="3" y="11" fontSize="6" fill="#ddd" fontFamily="Liberation Mono">C:\_</text></svg>,
  pc: <svg width="26" height="26"><defs><linearGradient id="pc"><stop stopColor="#21d789" /><stop offset=".4" stopColor="#dff43a" /></linearGradient></defs><rect width="26" height="26" fill="url(#pc)" /><rect x="3" y="3" width="20" height="20" fill="#070707" /><text x="5" y="13" fontSize="9.500" fontWeight="700" fontFamily="Liberation Sans" fill="#fff">PC</text><path d="M6 19h7" stroke="#fff" strokeWidth="1.500" /></svg>,
  code: <svg width="30" height="30"><path d="M22 0l8 4v22l-8 4L0 10l3-3 19 15z" fill="#1080c5" /><path d="M0 20l3 3L22 8V0z" fill="#1793d8" /><path d="M22 0l8 4v22l-8 4z" fill="#2aa5ee" /></svg>,
  db: <svg width="22" height="28"><path d="M0 4v20q11 8 22 0V4z" fill="#a8acb6" /><ellipse cx="11" cy="4" rx="11" ry="3.500" fill="#dfe1e7" /><path d="M0 13q11 5 22-2M0 20q12 4 22-4M4 26Q8 14 22 9" stroke="#555b66" fill="none" strokeWidth="1.400" /><path d="M3 8v16" stroke="#e5e7eb" strokeWidth="2" /></svg>,
  vbox: <svg width="26" height="30"><path d="M13 1l11 5-2 15-9 8-9-8L2 6z" fill="#16365d" stroke="#dfe7ef" strokeWidth="1.600" /><path d="M2 6l11 5 11-5M13 11v17" stroke="#dfe7ef" strokeWidth="1.600" fill="none" /><path d="M6 6l7-3 7 3-7 3z" fill="#2b5e92" /></svg>,
  tg: <svg width="32" height="32"><ellipse cx="15" cy="15" rx="14" ry="15" fill="#2499d1" /><foreignObject x="6" y="6" width="18" height="18"><FaTelegramPlane size={17} color="#fff" /></foreignObject><rect x="13" y="19" width="19" height="13" rx="4" fill="#828282" /><text x="22.500" y="30" fontSize="11" fill="#fff" textAnchor="middle" fontFamily="Noto Sans">..31</text></svg>,
  ds: <svg width="32" height="32"><ellipse cx="14" cy="15" rx="14" ry="15" fill="#5561ee" /><foreignObject x="4" y="5" width="20" height="20"><FaDiscord size={20} color="#fff" /></foreignObject><circle cx="21.500" cy="23" r="9" fill="#d93c3f" /><text x="21.500" y="27.500" fontSize="13" fill="#fff" textAnchor="middle" fontFamily="Noto Sans">9+</text></svg>,
  steam: <svg width="28" height="28"><defs><linearGradient id="st" y2="1" x2="0"><stop stopColor="#0b1730" /><stop offset="1" stopColor="#146a9e" /></linearGradient></defs><circle cx="14" cy="14" r="14" fill="url(#st)" /><foreignObject x="0" y="2" width="26" height="24"><FaSteamSymbol size={24} color="#fff" /></foreignObject></svg>,
  ya: <svg width="30" height="30"><circle cx="15" cy="15" r="15" fill="#fff" /><path d="M7 6l8 10v11" stroke="#ff3c1f" strokeWidth="4" fill="none" /><path d="M23 6l-8 10" stroke="#f45ac0" strokeWidth="4" /><path d="M15 15v12" stroke="#ff5a18" strokeWidth="4" /></svg>,
  pad: <svg width="26" height="28"><path d="M2 1h22l1 26H1z" fill="#d9e5ee" /><path d="M1 1h24v4H1zM1 24h24v3H1z" fill="#4b87b3" /><text x="3" y="16" fontSize="12" fontWeight="700" fill="#ee8a22" fontFamily="Liberation Sans">A</text><path d="M14 10h7M14 13h7M5 18h16M5 21h16" stroke="#7ba2c2" /></svg>,
  win: <svg width="28" height="24"><path d="M1 1h26v22H1z" fill="#eff0ee" stroke="#9aa09c" /><path d="M3 5h14v15H3z" fill="#3f8178" /><path d="M3 16l8-6 6 4v6H3z" fill="#6aa88c" /><path d="M22 5h4v10h-4z" fill="#589a70" /></svg>,
  t: <svg width="30" height="30"><rect x="1" y="1" width="28" height="28" fill="#dc1f24" stroke="#f1a9a9" strokeWidth="2" /><path d="M9 8h12v4h-4v12h-4V12H9z" fill="#fff" /><path d="M13 0h10l7 8v10z" fill="#4274e0" /><text transform="translate(16 4) rotate(45)" fontSize="6.500" fontWeight="700" fill="#fff" fontFamily="Liberation Sans">FREE</text></svg>,
  photos: <svg width="26" height="26"><rect width="26" height="26" rx="4" fill="#1f57b5" /><path d="M0 22l10-10q3-2 6 0l10 10q0 4-4 4H4q-4 0-4-4z" fill="#35b4ee" /><path d="M9 13q3-3 7 0l10 10V13L15 6z" fill="#2783da" opacity=".5" /><circle cx="19" cy="5" r="2.200" fill="#fff" /></svg>,
  deb: <svg width="30" height="30"><rect width="30" height="30" fill="#414446" /><path d="M4 30C1 14 8 4 18 5c11 1 13 17 3 19-7 1-9-7-4-9 3-1 5 2 3 4" stroke="#dc2350" strokeWidth="4.500" fill="none" /><rect width="12" height="10" fill="#fff" /><text x="1" y="8.500" fontSize="9" fontWeight="700" fill="#222" fontFamily="Liberation Sans">64</text></svg>,
};
const tasks: { i: keyof typeof icon; run?: boolean; on?: boolean; more?: boolean }[] = [
  { i: 'edge', run: true }, { i: 'perf' }, { i: 'files', run: true }, { i: 'nvidia' }, { i: 'vs' }, { i: 'ps' }, { i: 'cmd' }, { i: 'pc' }, { i: 'code' }, { i: 'db' },
  { i: 'vbox', run: true }, { i: 'tg', run: true }, { i: 'ds', run: true }, { i: 'steam', run: true }, { i: 'ya', run: true, on: true }, { i: 'pad', run: true, more: true },
  { i: 'win', run: true }, { i: 't', run: true }, { i: 'photos', run: true, more: true }, { i: 'deb', run: true },
];

function WindowsBar() {
  return (
    <Taskbar $h={50}>
      <Cell $w={60}><Icon w={20} h={20} sw={0}><path d="M0 3l8.500-1.200v7.700H0zM9.500 1.600L20 0v9.500H9.500zM0 10.500h8.500v7.700L0 17zM9.500 10.500H20V20L9.500 18.400z" fill="#fff" /></Icon></Cell>
      <Search>
        <Icon w={21} h={21} c="#222" sw={1.500}><circle cx="13" cy="8" r="7" /><path d="M8 13L.5 20.500" /></Icon>
        <Label w={54} l={14} s={18.500} t={1} text="Поиск" />
        <Cell $w={90} $l={161}><Hat /></Cell>
      </Search>
      <Cell $w={22} $l={19}><Icon w={21} h={20} c="#eee" sw={1.300}><path d="M1 0v3h12V0M1 20v-3h12v3M1 6h12v8H1zM19 0v3M19 10v10" /><path d="M17.500 5.500h3v3h-3z" fill="#eee" stroke="none" /></Icon></Cell>
      <Cell $w={29} />
      <Assistant>{icon.alice}</Assistant>
      <Cell $w={10} />
      {tasks.map(t => <Task key={t.i} $run={t.run} $on={t.on} $more={t.more}>{icon[t.i]}</Task>)}
      <Cell $w={16} $l={41.500}><Icon w={16} h={9} c="#eee"><path d="M.5 8.500L8 1l7.500 7.500" /></Icon></Cell>
      <Cell $w={20} $l={12}><Icon w={20} h={14} c="#eee" sw={1.200}><rect x="4.500" y="2.500" width="13" height="10" /><path d="M6 4h10v7H6zM18 5.500h2v4h-2z" fill="#eee" stroke="none" /><path d="M0 3h5v3q-2.500 2-5 0zM1 0v3M4 0v3M2.500 7v6H5" /></Icon></Cell>
      <Cell $w={17} $l={13}><Icon w={16} h={16} c="#ddd" sw={1.200}><path d="M0 15Q1 2 15 1M4 15Q5 6 15 5M8 15Q9 10 15 9" /><circle cx="13.500" cy="14" r="1.600" fill="#fff" stroke="none" /></Icon></Cell>
      <Cell $w={20} $l={10}><Icon w={20} h={18} c="#ddd" sw={1.200}><path d="M0 6h3l4-4v14l-4-4H0zM10 6q2 3 0 6M13 4q4 5 0 10M16 1q6 8 0 16" /></Icon></Cell>
      <Label w={28} l={14} s={14} t={1} text="ENG" />
      <Clock><Label w={35} s={14.500} text="20:32" /><Label w={70} s={14.500} text="04.07.2025" /></Clock>
      <Cell $w={20} $l={22.500}><Icon w={20} h={20} c="#fff"><path d="M.7 1h18.600v15h-6L10 19l-3.300-3h-6z" /></Icon></Cell>
      <Divider $l={25} $h={50} $c="#555" />
    </Taskbar>
  );
}

export default function App() {
  return (
    <Screen>
      <Global />
      <BrowserTabs />
      <BrowserBars />
      <Sessions $h={24}>
        {sessions.map(([name, w, tw]) => (
          <Session key={name} $w={w} $on={name === 'Kali'}>
            <Label w={tw} s={12} t={1} b={700} f='"Liberation Sans", sans-serif' text={name} />
            <Cell $w={6} $l={name === 'Kali' ? 9 : 5}><Icon w={6} h={6} c="#777" sw={1.800}><path d="M.5.5l5 5M5.500.5l-5 5" /></Icon></Cell>
          </Session>
        ))}
      </Sessions>
      <Stage>
        <Desktop>
          <KaliPanel />
          <Firefox />
          <Page>
            <Title><Label w={276} s={37.500} b={700} f='"DejaVu Serif", serif' text="Регистрация" /></Title>
            <Field placeholder="Login" />
            <Field placeholder="Email" />
            <Field placeholder="Password" />
            <Submit><Label w={90} s={15.800} text="Продолжить" /></Submit>
          </Page>
        </Desktop>
      </Stage>
      <WindowsBar />
    </Screen>
  );
}
